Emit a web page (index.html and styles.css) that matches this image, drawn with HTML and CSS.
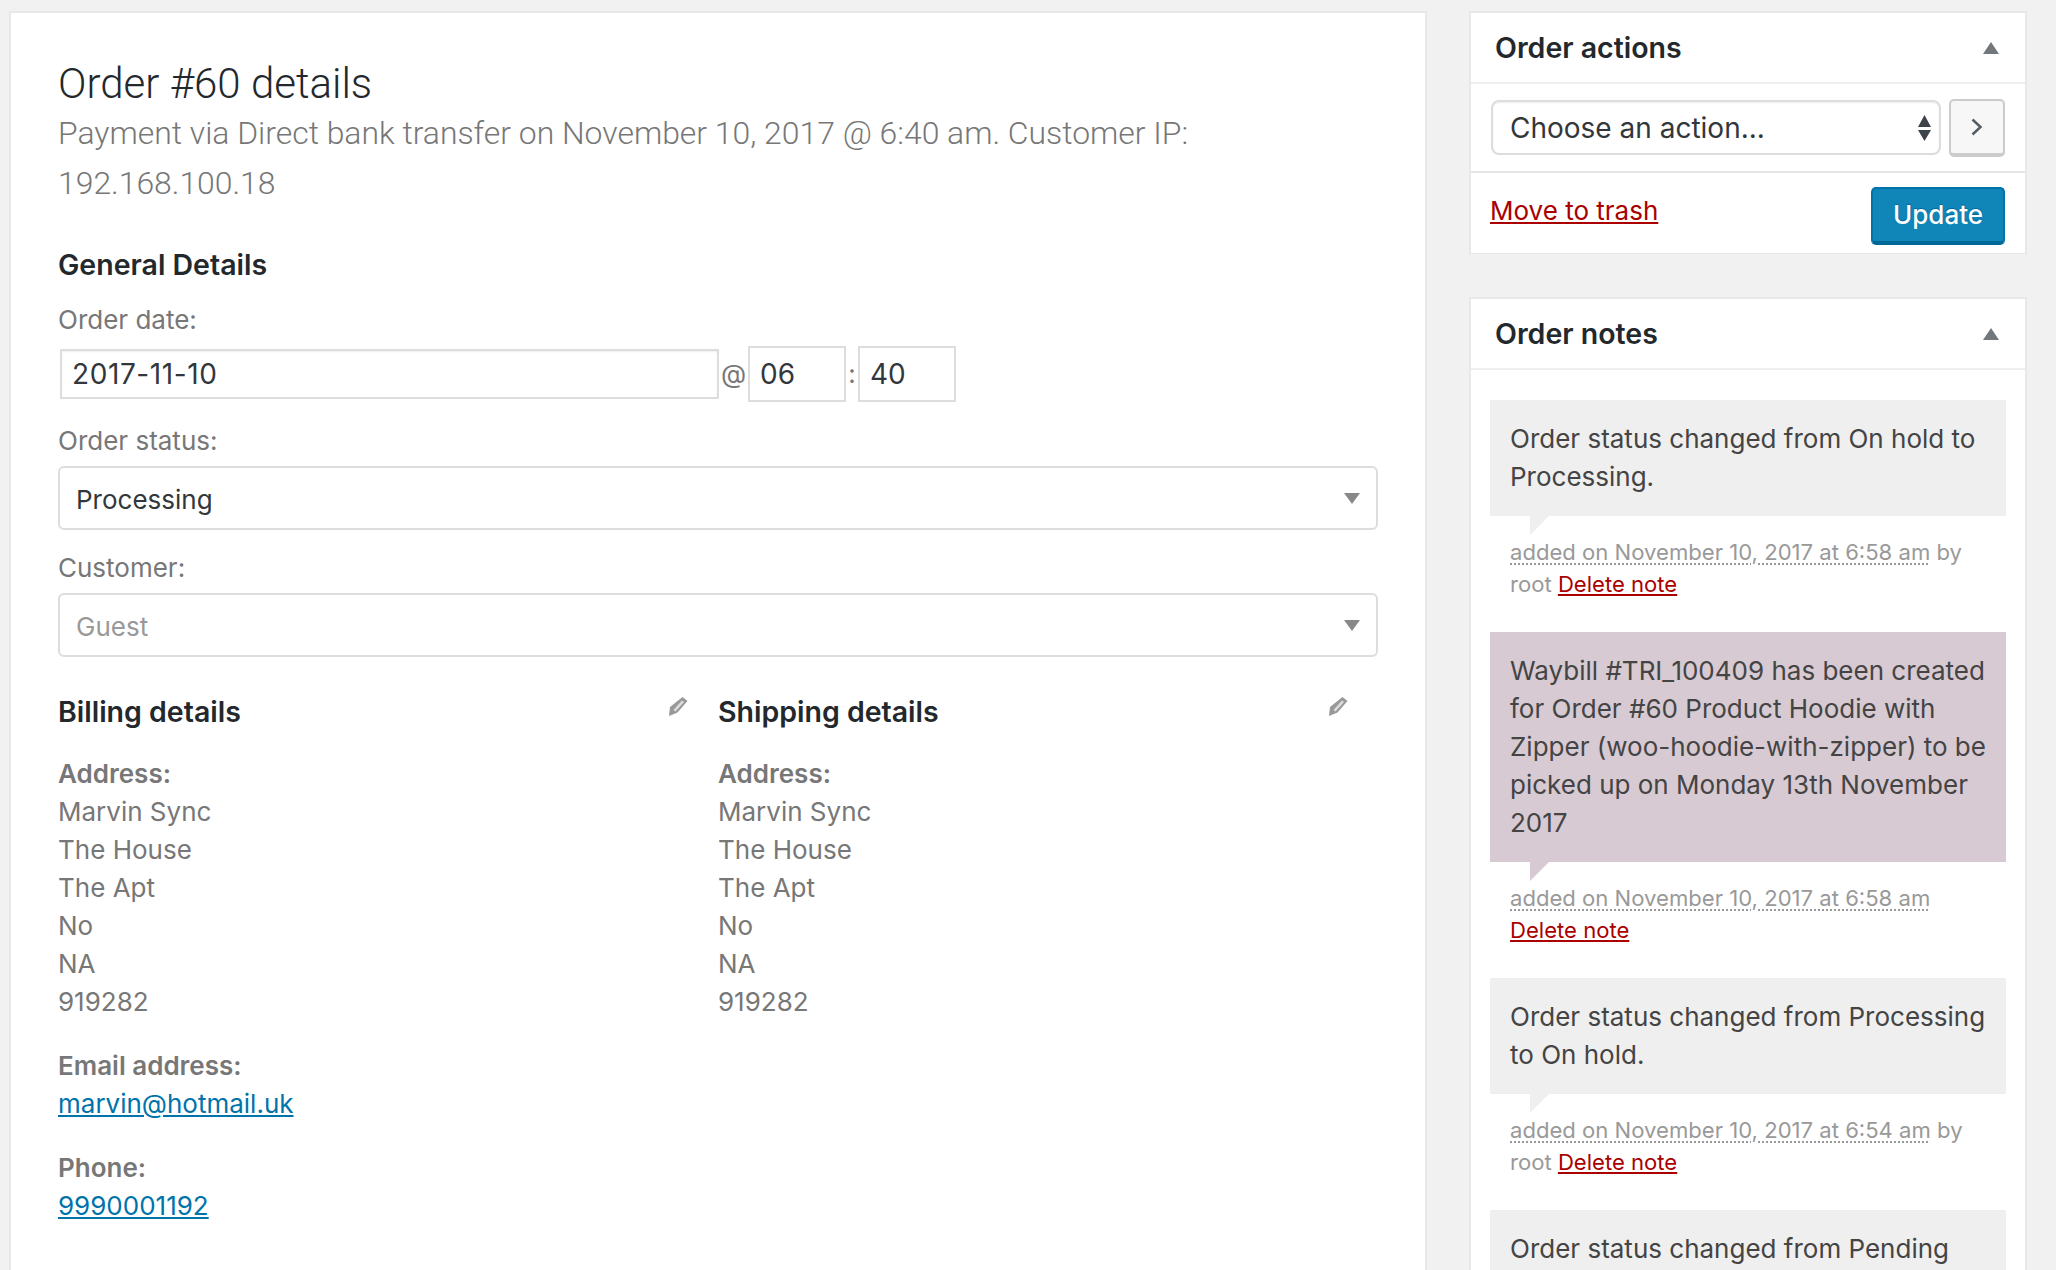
FILE: index.html
```html
<!DOCTYPE html>
<html lang="en">
<head>
    <meta charset="UTF-8">
    <title>Edit order</title>
    <link rel="stylesheet" href="styles.css">
</head>
<body>
    <div class="page">
        <div class="order-panel">
            <h2>Order #60 details</h2>
            <p class="order-meta">Payment via Direct bank transfer on November 10, 2017 @ 6:40 am. Customer IP:<br>192.168.100.18</p>

            <h3 class="general-title">General Details</h3>
            <label class="field-label first">Order date:</label>
            <div class="date-row">
                <input class="date-input" type="text" value="2017-11-10">
                <span class="date-sep at">@</span>
                <input class="time-input" type="text" value="06">
                <span class="date-sep colon">:</span>
                <input class="time-input" type="text" value="40">
            </div>
            <label class="field-label">Order status:</label>
            <div class="select-box">
                <span>Processing</span>
                <svg class="select-arrow" viewBox="0 0 16 11"><path d="M0 0h16L8 11z"/></svg>
            </div>
            <label class="field-label customer-label">Customer:</label>
            <div class="select-box guest">
                <span>Guest</span>
                <svg class="select-arrow" viewBox="0 0 16 11"><path d="M0 0h16L8 11z"/></svg>
            </div>

            <div class="address-cols">
                <div class="address-col">
                    <div class="address-head">
                        <h3>Billing details</h3>
                        <svg class="pencil" viewBox="0 0 20 20"><path d="M14.500 0l5 4-10 11.500-8.500 3.500 1-9z"/><path class="pencil-stripe" d="M14 3.500l2 1.500-8.500 9.500-2-1.500z"/></svg>
                    </div>
                    <div class="address-text">
                        <strong>Address:</strong><br>Marvin Sync<br>The House<br>The Apt<br>No<br>NA<br>919282
                    </div>
                    <div class="address-text"><strong>Email address:</strong><br><a href="#">marvin@hotmail.uk</a></div>
                    <div class="address-text"><strong>Phone:</strong><br><a href="#">9990001192</a></div>
                </div>
                <div class="address-col">
                    <div class="address-head">
                        <h3>Shipping details</h3>
                        <svg class="pencil" viewBox="0 0 20 20"><path d="M14.500 0l5 4-10 11.500-8.500 3.500 1-9z"/><path class="pencil-stripe" d="M14 3.500l2 1.500-8.500 9.500-2-1.500z"/></svg>
                    </div>
                    <div class="address-text">
                        <strong>Address:</strong><br>Marvin Sync<br>The House<br>The Apt<br>No<br>NA<br>919282
                    </div>
                </div>
            </div>
        </div>

        <div class="sidebar">
            <div class="box">
                <div class="box-head">
                    <h3>Order actions</h3>
                    <svg class="toggle" viewBox="0 0 16 12"><path d="M8 0l8 12H0z"/></svg>
                </div>
                <div class="action-row">
                    <div class="action-select">
                        <span>Choose an action...</span>
                        <svg class="updown" viewBox="0 0 13 26"><path d="M6.500 0L13 12H0zM0 15h13l-6.500 11z"/></svg>
                    </div>
                    <button class="go-btn"><svg viewBox="0 0 12 18"><path d="M1.500 1.500L9.500 9l-8 7.500" fill="none" stroke="#555d66" stroke-width="2.500"/></svg></button>
                </div>
                <div class="action-foot">
                    <a class="trash" href="#">Move to trash</a>
                    <button class="update-btn">Update</button>
                </div>
            </div>

            <div class="box">
                <div class="box-head">
                    <h3>Order notes</h3>
                    <svg class="toggle" viewBox="0 0 16 12"><path d="M8 0l8 12H0z"/></svg>
                </div>
                <ul class="notes">
                    <li class="note">
                        <div class="note-body">Order status changed from On hold to<br>Processing.</div>
                        <p class="note-meta"><abbr>added on November 10, 2017 at 6:58 am</abbr> by<br>root <a href="#">Delete note</a></p>
                    </li>
                    <li class="note customer">
                        <div class="note-body">Waybill #TRI_100409 has been created<br>for Order #60 Product Hoodie with<br>Zipper (woo-hoodie-with-zipper) to be<br>picked up on Monday 13th November<br>2017</div>
                        <p class="note-meta"><abbr>added on November 10, 2017 at 6:58 am</abbr><br><a href="#">Delete note</a></p>
                    </li>
                    <li class="note">
                        <div class="note-body">Order status changed from Processing<br>to On hold.</div>
                        <p class="note-meta"><abbr>added on November 10, 2017 at 6:54 am</abbr> by<br>root <a href="#">Delete note</a></p>
                    </li>
                    <li class="note">
                        <div class="note-body">Order status changed from Pending<br>payment to On hold.</div>
                    </li>
                </ul>
            </div>
        </div>
    </div>
</body>
</html>
```
FILE: styles.css
```css
html, body {
    margin: 0;
    height: 100%;
    overflow: hidden;
}

body {
    background-color: #f1f1f1;
    font-family: Inter, "Noto Sans", sans-serif;
    font-size: 26px;
    line-height: 38px;
    color: #444;
}

.page {
    display: flex;
    align-items: flex-start;
    padding: 11px 29px 0 9px;
    gap: 42px;
}

/* main panel */
.order-panel {
    width: 1418px;
    height: 1400px;
    box-sizing: border-box;
    flex: none;
    background: #fff;
    border: 2px solid #e8e8e8;
    padding: 46px 48px 0 47px;
}

h2 {
    margin: 0;
    font-family: Roboto, sans-serif;
    font-weight: 300;
    font-size: 42px;
    line-height: 49px;
    color: #23282d;
}

.order-meta {
    margin: 0;
    font-family: Roboto, sans-serif;
    font-weight: 300;
    font-size: 31.900px;
    line-height: 50px;
    color: #777;
}

h3 {
    margin: 0;
    font-size: 28.500px;
    line-height: 38px;
    font-weight: 600;
    color: #23282d;
}

.general-title {
    margin-top: 38px;
}

.field-label {
    display: block;
    color: #777;
    margin-top: 20px;
    line-height: 38px;
}

.field-label.first {
    margin-top: 17px;
}

.field-label.customer-label {
    margin-top: 19px;
}

.date-row {
    display: flex;
    align-items: center;
    margin: 7px 0 0 2px;
    height: 56px;
}

input {
    font: inherit;
    font-size: 28px;
    color: #32373c;
    box-sizing: border-box;
    background: #fff;
    border: 2px solid #ddd;
    outline: none;
}

.date-input {
    width: 659px;
    height: 50px;
    padding: 0 10px;
    letter-spacing: .6px;
    box-shadow: inset 0 1px 2px rgba(0, 0, 0, .07);
}

.time-input {
    width: 98px;
    height: 56px;
    padding: 0 10px;
}

.date-sep {
    color: #777;
    text-align: center;
}

.date-sep.at {
    width: 29px;
}

.date-sep.colon {
    width: 12px;
}

.select-box {
    display: flex;
    align-items: center;
    justify-content: space-between;
    box-sizing: border-box;
    width: 1320px;
    height: 64px;
    margin-top: 6px;
    padding: 0 16px;
    border: 2px solid #ddd;
    border-radius: 6px;
    color: #32373c;
}

.select-box span {
    padding-top: 4px;
}

.select-box.guest {
    color: #999;
    margin-top: 6px;
}

.select-arrow {
    width: 16px;
    height: 11px;
    fill: #888;
}

/* billing + shipping */
.address-cols {
    display: flex;
    margin-top: 36px;
}

.address-col {
    width: 660px;
    flex: none;
}

.address-head {
    display: flex;
    align-items: flex-start;
    justify-content: space-between;
    padding-right: 30px;
    margin-bottom: 24px;
}

.pencil {
    width: 20px;
    height: 20px;
    margin-top: 4px;
    fill: #999;
}

.pencil-stripe {
    fill: #ddd;
}

.address-text {
    color: #777;
    margin-bottom: 26px;
}

.address-text strong {
    font-weight: 600;
}

.address-text a {
    color: #0073aa;
}

/* sidebar */
.sidebar {
    width: 558px;
    flex: none;
}

.box {
    background: #fff;
    border: 2px solid #e8e8e8;
    border-bottom-width: 1px;
    margin-bottom: 43px;
}

.box-head {
    display: flex;
    align-items: center;
    justify-content: space-between;
    box-sizing: border-box;
    height: 71px;
    padding: 0 26px 0 24px;
    border-bottom: 2px solid #eee;
}

.toggle {
    width: 16px;
    height: 12px;
    fill: #72777c;
}

.action-row {
    display: flex;
    align-items: center;
    gap: 8px;
    height: 87px;
    padding: 0 20px;
    border-bottom: 2px solid #e5e5e5;
}

.action-select {
    display: flex;
    align-items: center;
    justify-content: space-between;
    box-sizing: border-box;
    width: 451px;
    height: 55px;
    padding: 0 8px 0 17px;
    border: 2px solid #ddd;
    border-radius: 8px;
    box-shadow: inset 0 1px 2px rgba(0, 0, 0, .07);
    color: #32373c;
    font-size: 28px;
}

.updown {
    width: 13px;
    height: 26px;
    fill: #3c434a;
}

.go-btn {
    display: flex;
    align-items: center;
    justify-content: center;
    box-sizing: border-box;
    width: 56px;
    height: 58px;
    padding: 0;
    background: #f7f7f7;
    border: 2px solid #ccc;
    border-bottom-width: 4px;
    border-radius: 5px;
}

.go-btn svg {
    width: 12px;
    height: 18px;
}

.action-foot {
    display: flex;
    align-items: flex-start;
    justify-content: space-between;
    box-sizing: border-box;
    height: 80px;
    padding: 14px 20px 0 19px;
}

.trash {
    color: #a00;
    margin-top: 5px;
}

.update-btn {
    box-sizing: border-box;
    width: 134px;
    height: 58px;
    padding: 0;
    font: inherit;
    font-weight: 500;
    color: #fff;
    background: #0f85b8;
    border: 2px solid #0073aa;
    border-bottom: 4px solid #006799;
    border-radius: 5px;
    text-shadow: 0 -1px 1px #006799;
}

.notes {
    list-style: none;
    margin: 0;
    padding: 30px 19px 0;
}

.note {
    margin-bottom: 32px;
}

.note-body {
    position: relative;
    background: #efefef;
    padding: 20px 10px 20px 20px;
    margin-bottom: 20px;
    white-space: nowrap;
}

.note-body::after {
    content: "";
    position: absolute;
    left: 40px;
    top: 100%;
    border-style: solid;
    border-width: 19px 19px 0 0;
    border-color: #efefef transparent transparent transparent;
}

.note.customer .note-body {
    background: #d7cad2;
}

.note.customer .note-body::after {
    border-top-color: #d7cad2;
}

.note-meta {
    margin: 0;
    padding: 0 20px;
    font-size: 22.100px;
    line-height: 32px;
    color: #999;
}

.note-meta abbr {
    text-decoration: underline dotted #999 2px;
    text-underline-offset: 3px;
}

.note-meta a {
    color: #a00;
}
```
